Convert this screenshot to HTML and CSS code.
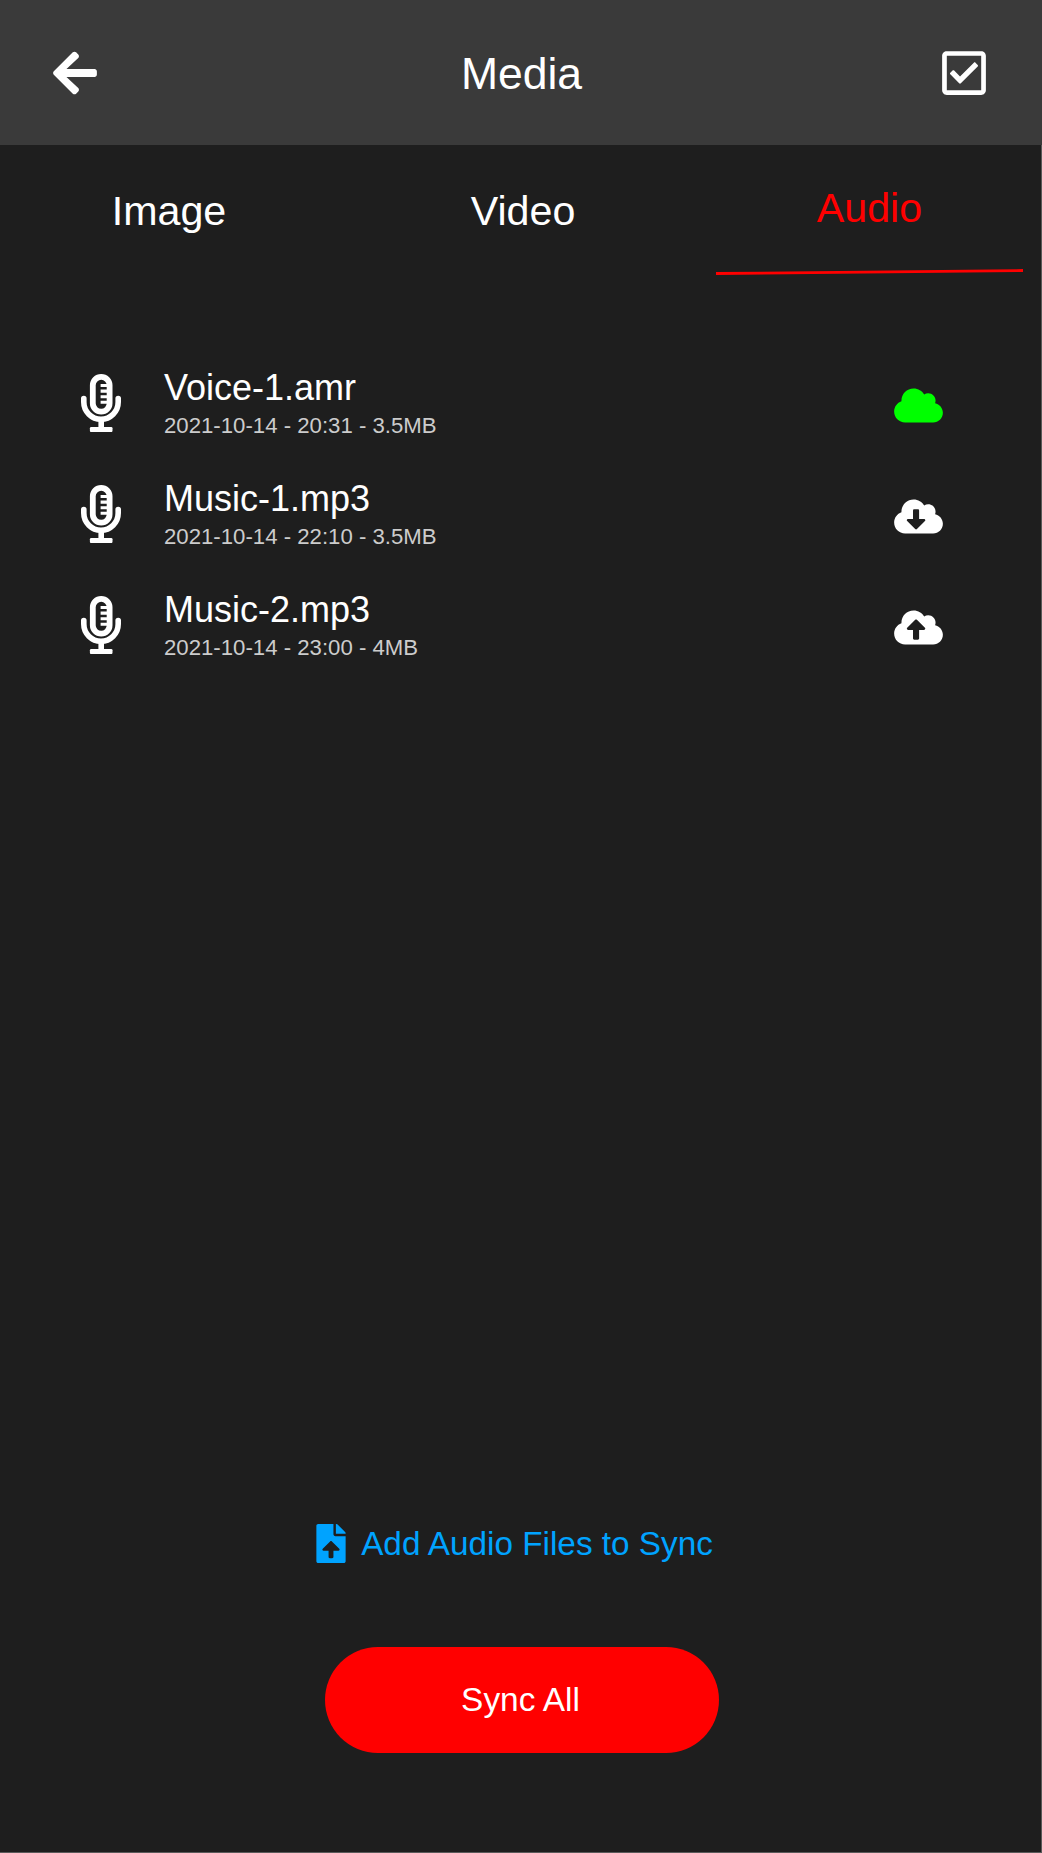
FILE: index.html
```
<!DOCTYPE html>
<html lang="en">
  <head>
    <meta charset="UTF-8" />
    <meta name="viewport" content="width=device-width, initial-scale=1.0" />
    <title>Media</title>
    <link rel="stylesheet" href="styles.css">
  </head>
  <body>
    <svg class="sprite">
      <symbol id="mic" viewBox="0 0 40 58">
        <g fill="none" stroke="currentColor">
          <rect x="11.8" y="2.9" width="16.8" height="34.8" rx="8.4" stroke-width="5.8" />
          <path d="M2.8 24.6V28a17.2 17.2 0 0 0 34.4 0v-3.4" stroke-width="5.6" stroke-linecap="round" />
          <path d="M20.2 45v10" stroke-width="5.6" />
          <rect x="10.2" y="54.2" width="20" height="2.6" stroke-width="2.6" stroke-linejoin="round" />
          <path d="M19.6 11.5h7M19.6 17.1h7M19.6 22.7h7M19.6 28.3h7" stroke-width="3.1" />
        </g>
      </symbol>
    </svg>
    <div class="screen">
      <header class="header">
        <a class="back" href="#">
          <svg viewBox="0 0 448 512"><path d="M257.5 445.1l-22.2 22.2c-9.4 9.4-24.6 9.4-33.9 0L7 273c-9.4-9.4-9.4-24.6 0-33.9L201.4 44.7c9.4-9.4 24.6-9.4 33.9 0l22.2 22.2c9.5 9.5 9.3 25-.4 34.3L136.6 216H424c13.3 0 24 10.7 24 24v32c0 13.3-10.7 24-24 24H136.6l120.5 114.8c9.8 9.3 10 24.8.4 34.3z"/></svg>
        </a>
        <h1>Media</h1>
        <a class="select" href="#">
          <svg viewBox="0 0 448 512"><path d="M400 32H48C21.49 32 0 53.49 0 80v352c0 26.51 21.49 48 48 48h352c26.51 0 48-21.49 48-48V80c0-26.51-21.49-48-48-48zm0 400H48V80h352v352zm-35.864-241.724L191.547 361.48c-4.705 4.667-12.303 4.637-16.97-.068l-90.781-91.516c-4.667-4.705-4.637-12.303.069-16.971l22.719-22.536c4.705-4.667 12.303-4.637 16.97.069l59.792 60.277 141.352-140.216c4.705-4.667 12.303-4.637 16.97.068l22.536 22.718c4.667 4.706 4.637 12.304-.068 16.971z"/></svg>
        </a>
      </header>
      <nav class="tabs">
        <a class="tab" href="#">Image</a>
        <a class="tab" href="#">Video</a>
        <a class="tab active" href="#">
          Audio
          <svg class="underline" viewBox="0 0 307 6"><path d="M0 4.5L307 1.5" /></svg>
        </a>
      </nav>
      <ul class="files">
        <li class="file">
          <svg class="mic"><use href="#mic" /></svg>
          <div class="info">
            <p class="name">Voice-1.amr</p>
            <p class="meta">2021-10-14 - 20:31 - 3.5MB</p>
          </div>
          <svg class="cloud synced" viewBox="0 0 640 512"><path d="M537.6 226.6c4.1-10.7 6.4-22.4 6.4-34.6 0-53-43-96-96-96-19.7 0-38.1 6-53.3 16.2C367 64.2 315.3 32 256 32c-88.4 0-160 71.6-160 160 0 2.7.1 5.4.2 8.1C40.2 219.8 0 273.2 0 336c0 79.5 64.5 144 144 144h368c70.7 0 128-57.3 128-128 0-61.9-44-113.6-102.4-125.4z"/></svg>
        </li>
        <li class="file">
          <svg class="mic"><use href="#mic" /></svg>
          <div class="info">
            <p class="name">Music-1.mp3</p>
            <p class="meta">2021-10-14 - 22:10 - 3.5MB</p>
          </div>
          <svg class="cloud" viewBox="0 0 640 512"><path d="M537.6 226.6c4.1-10.7 6.4-22.4 6.4-34.6 0-53-43-96-96-96-19.7 0-38.1 6-53.3 16.2C367 64.2 315.3 32 256 32c-88.4 0-160 71.6-160 160 0 2.7.1 5.4.2 8.1C40.2 219.8 0 273.2 0 336c0 79.5 64.5 144 144 144h368c70.7 0 128-57.3 128-128 0-61.9-44-113.6-102.4-125.4zm-132.9 88.7L299.3 420.7c-6.2 6.2-16.4 6.2-22.6 0L171.3 315.3c-10.1-10.1-2.9-27.3 11.3-27.3H248V176c0-8.8 7.2-16 16-16h48c8.8 0 16 7.2 16 16v112h65.4c14.2 0 21.4 17.2 11.3 27.3z"/></svg>
        </li>
        <li class="file">
          <svg class="mic"><use href="#mic" /></svg>
          <div class="info">
            <p class="name">Music-2.mp3</p>
            <p class="meta">2021-10-14 - 23:00 - 4MB</p>
          </div>
          <svg class="cloud" viewBox="0 0 640 512"><path d="M537.6 226.6c4.1-10.7 6.4-22.4 6.4-34.6 0-53-43-96-96-96-19.7 0-38.1 6-53.3 16.2C367 64.2 315.3 32 256 32c-88.4 0-160 71.6-160 160 0 2.7.1 5.4.2 8.1C40.2 219.8 0 273.2 0 336c0 79.5 64.5 144 144 144h368c70.7 0 128-57.3 128-128 0-61.9-44-113.6-102.4-125.4zM393.4 288H328v112c0 8.8-7.2 16-16 16h-48c-8.8 0-16-7.2-16-16V288h-65.4c-14.3 0-21.4-17.2-11.3-27.3l105.4-105.4c6.2-6.2 16.4-6.2 22.6 0l105.4 105.4c10.1 10.1 2.9 27.3-11.3 27.3z"/></svg>
        </li>
      </ul>
      <footer class="actions">
        <a class="add" href="#">
          <svg viewBox="0 0 384 512"><path d="M224 136V0H24C10.7 0 0 10.7 0 24v464c0 13.3 10.7 24 24 24h336c13.3 0 24-10.7 24-24V160H248c-13.2 0-24-10.8-24-24zm65.18 216.01H224v80c0 8.84-7.16 16-16 16h-32c-8.84 0-16-7.16-16-16v-80H94.82c-14.28 0-21.41-17.29-11.27-27.36l96.42-95.7c6.65-6.61 17.39-6.61 24.04 0l96.42 95.7c10.15 10.07 3.03 27.36-11.25 27.36zM377 105L279.1 7c-4.5-4.5-10.6-7-17-7H256v128h128v-6.1c0-6.3-2.5-12.4-7-16.9z"/></svg>
          <span>Add Audio Files to Sync</span>
        </a>
        <button class="sync">Sync All</button>
      </footer>
    </div>
  </body>
</html>
```
FILE: styles.css
```
* {
  margin: 0;
  padding: 0;
  box-sizing: border-box;
}
body {
  background: #1e1e1e;
  color: #fff;
  font-family: "Liberation Sans", Helvetica, Arial, sans-serif;
}
a {
  color: inherit;
  text-decoration: none;
}
svg {
  display: block;
  fill: currentColor;
  flex-shrink: 0;
}
.sprite {
  display: none;
}
.screen {
  width: 1042px;
  height: 1853px;
  display: flex;
  flex-direction: column;
}
.header {
  height: 145px;
  padding: 0 56px 0 53px;
  background: #3a3a3a;
  display: flex;
  align-items: center;
  justify-content: space-between;
}
.header svg {
  width: 44px;
  height: 50px;
  margin-top: 1px;
}
.header h1 {
  font-size: 44.5px;
  font-weight: 400;
  line-height: 52px;
  margin-top: 3px;
  padding-left: 4px;
}
.tabs {
  height: 150px;
  padding: 0 18px 0 8px;
  display: grid;
  grid-template-columns: 322px 1fr 307px;
  border-right: 1px solid #5a5a5a;
}
.tab {
  padding-top: 42px;
  font-size: 41.2px;
  line-height: 48px;
  text-align: center;
}
.tab.active {
  padding-top: 39px;
  color: #f00;
}
.underline {
  width: 307px;
  height: 6px;
  margin-top: 37px;
  fill: none;
  stroke: #f00;
  stroke-width: 2.8;
}
.files {
  flex: 1;
  padding: 71px 98px 0 81px;
  list-style: none;
  border-right: 1px solid #5a5a5a;
}
.file {
  height: 111px;
  display: flex;
  align-items: flex-start;
}
.mic {
  width: 40px;
  height: 58px;
  margin-top: 8px;
}
.info {
  flex: 1;
  margin-left: 43px;
}
.name {
  font-size: 36px;
  line-height: 42px;
  padding-top: 1px;
}
.meta {
  color: #ccc;
  font-size: 22.2px;
  line-height: 26px;
  margin-top: 4px;
}
.cloud {
  width: 49px;
  height: 39px;
  margin-top: 20px;
}
.cloud.synced {
  color: #0f0;
}
.actions {
  height: 335px;
  padding-top: 6px;
  display: flex;
  flex-direction: column;
  align-items: center;
  border-right: 1px solid #5a5a5a;
  border-bottom: 1px solid #5a5a5a;
}
.add {
  height: 39px;
  color: #00a3ff;
  display: flex;
  align-items: center;
  gap: 15px;
  margin-right: 12px;
  font-size: 33.3px;
  line-height: 38px;
}
.add svg {
  width: 30px;
  height: 39px;
}
.sync {
  width: 394px;
  height: 106px;
  margin: 84px 0 0 3px;
  padding-right: 3px;
  border: none;
  border-radius: 53px;
  background: #f00;
  color: #fff;
  font-family: inherit;
  font-size: 33.4px;
}
```
